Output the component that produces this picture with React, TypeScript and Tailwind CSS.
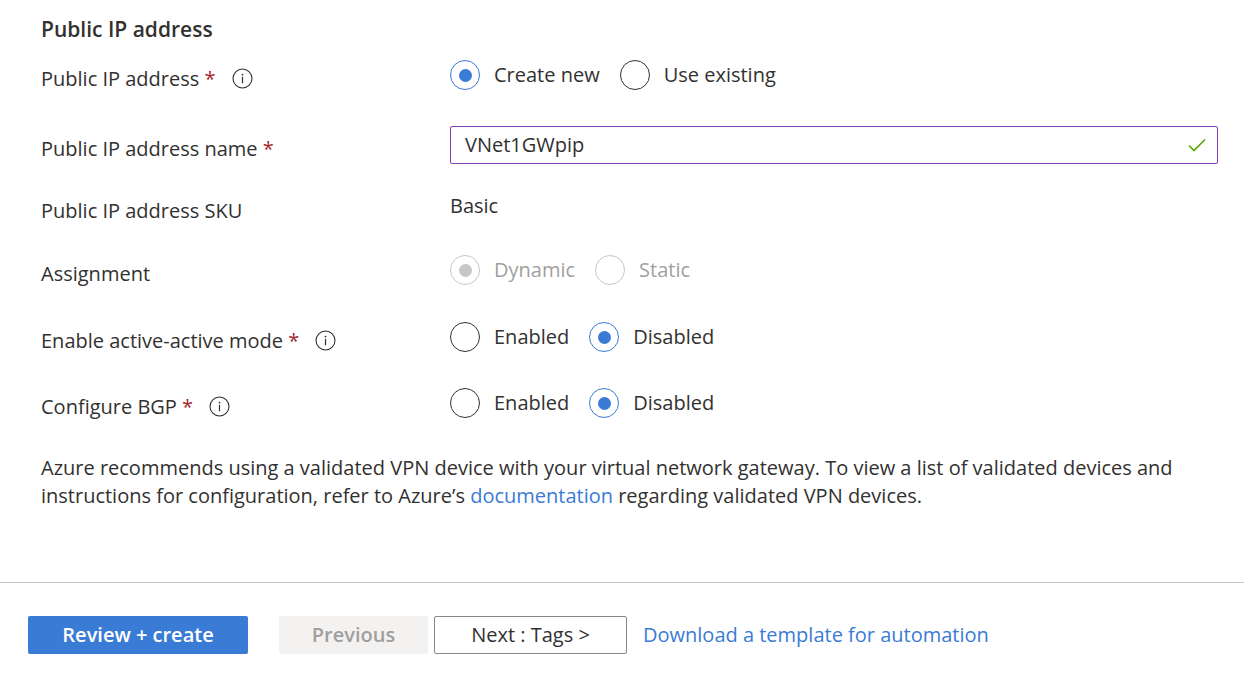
import React from "react";

const font = { fontFamily: '"Segoe UI", "Open Sans", "Noto Sans", sans-serif' };

function Info() {
  return (
    <svg width="21" height="21" viewBox="0 0 21 21" className="shrink-0">
      <circle cx="10.5" cy="10.5" r="9.5" fill="none" stroke="#323130" strokeWidth="1.1" />
      <circle cx="10.5" cy="6.6" r="0.9" fill="#323130" />
      <rect x="9.9" y="8.8" width="1.2" height="6.4" fill="#323130" />
    </svg>
  );
}

function Radio({ checked, disabled, label }: { checked?: boolean; disabled?: boolean; label: string }) {
  const border = disabled ? "border-[#c8c6c4]" : checked ? "border-[#3a7bd5]" : "border-[#323130]";
  const dot = disabled ? "bg-[#c8c6c4]" : "bg-[#3a7bd5]";
  return (
    <div className="flex items-center">
      <div className={`w-[30px] h-[30px] rounded-full border ${border} flex items-center justify-center shrink-0`}>
        {checked && <div className={`w-[13px] h-[13px] rounded-full ${dot}`} />}
      </div>
      <span className={`ml-[14px] ${disabled ? "text-[#a19f9d]" : "text-[#323130]"}`}>{label}</span>
    </div>
  );
}

function Label({ text, required, info }: { text: string; required?: boolean; info?: boolean }) {
  return (
    <div className="w-[409px] shrink-0 flex items-center pt-[7px]">
      <span>
        {text}
        {required && <span className="text-[#a4262c]"> *</span>}
      </span>
      {info && (
        <span className="ml-[16px] flex">
          <Info />
        </span>
      )}
    </div>
  );
}

export default function App() {
  return (
    <div className="w-[1244px] h-[678px] bg-white text-[#323130] text-[20px] overflow-hidden" style={font}>
      <div className="pl-[41px] pt-[15px] pr-[26px]">
        <div className="h-[28px] leading-[28px] font-semibold text-[21px]">Public IP address</div>

        <div className="mt-[12px] h-[40px] flex items-center">
          <Label text="Public IP address" required info />
          <div className="flex items-center gap-[20px]">
            <Radio checked label="Create new" />
            <Radio label="Use existing" />
          </div>
        </div>

        <div className="mt-[30px] h-[40px] flex items-center">
          <Label text="Public IP address name" required />
          <div className="flex-1 h-[38px] border border-[#8a3eb3] rounded-[2px] flex items-center justify-between pl-[14px] pr-[10px]">
            <span>VNet1GWpip</span>
            <svg width="20" height="16" viewBox="0 0 20 16">
              <path d="M2 8.5 L7 13.5 L18 2.5" fill="none" stroke="#57a300" strokeWidth="1.6" />
            </svg>
          </div>
        </div>

        <div className="mt-[22px] h-[40px] flex items-center">
          <Label text="Public IP address SKU" />
          <span className="-mt-[2px]">Basic</span>
        </div>

        <div className="mt-[23px] h-[40px] flex items-center">
          <Label text="Assignment" />
          <div className="flex items-center gap-[20px]">
            <Radio checked disabled label="Dynamic" />
            <Radio disabled label="Static" />
          </div>
        </div>

        <div className="mt-[27px] h-[40px] flex items-center">
          <Label text="Enable active-active mode" required info />
          <div className="flex items-center gap-[20px]">
            <Radio label="Enabled" />
            <Radio checked label="Disabled" />
          </div>
        </div>

        <div className="mt-[26px] h-[40px] flex items-center">
          <Label text="Configure BGP" required info />
          <div className="flex items-center gap-[20px]">
            <Radio label="Enabled" />
            <Radio checked label="Disabled" />
          </div>
        </div>

        <p className="mt-[31px] leading-[28px]">
          Azure recommends using a validated VPN device with your virtual network gateway. To view a list of validated devices and
          <br />
          instructions for configuration, refer to Azure’s <span className="text-[#3a7bd5]">documentation</span> regarding validated VPN devices.
        </p>
      </div>

      <div className="mt-[72px] border-t border-[#c8c6c4]" />

      <div className="pl-[28px] pt-[33px] flex items-center">
        <button className="w-[220px] h-[38px] rounded-[2px] bg-[#3a7bd5] text-white font-semibold">Review + create</button>
        <button className="ml-[31px] w-[149px] h-[38px] rounded-[2px] bg-[#f3f2f1] text-[#a19f9d] font-semibold">Previous</button>
        <button className="ml-[6px] w-[193px] h-[38px] rounded-[2px] border border-[#8a8886] bg-white text-[#323130]">Next : Tags &gt;</button>
        <span className="ml-[16px] text-[#3a7bd5]">Download a template for automation</span>
      </div>
    </div>
  );
}
